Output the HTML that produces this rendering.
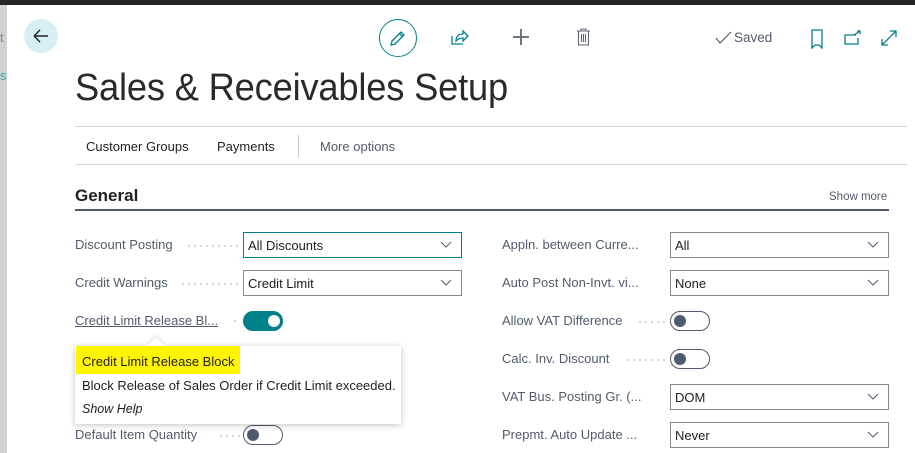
<!DOCTYPE html>
<html><head><meta charset="utf-8"><style>
*{box-sizing:border-box;margin:0;padding:0}
body{width:915px;height:453px;overflow:hidden;background:#fff;font-family:"Liberation Sans",sans-serif;color:#212121;position:relative}
.a{position:absolute}
.lbl{position:absolute;font-size:13px;color:#505c6d;white-space:nowrap}
.dots{position:absolute;height:2px;background-image:radial-gradient(circle,#c8c8c8 0.8px,transparent 1px);background-size:6px 2px}
.inp{position:absolute;height:26px;border:1px solid #8a8886;font-size:13px;color:#212121;padding:5px 0 0 4px;background:#fff}
.inp svg{position:absolute;right:9px;top:8px}
.tog{position:absolute;width:40px;height:20px;border:1px solid #505c6d;border-radius:10px;background:#fff}
.tog::after{content:"";position:absolute;left:3px;top:3px;width:12px;height:12px;border-radius:50%;background:#505c6d}
.tog.on{background:#00818a;border-color:#00818a}
.tog.on::after{left:24px;background:#fff}
</style></head><body>
<div class="a" style="left:0;top:0;width:915px;height:5px;background:#262626"></div>
<div class="a" style="left:0;top:5px;width:7px;height:448px;background:#d0d2d3"></div>
<div class="a" style="left:0;top:30px;font-size:13px;color:#888">t</div>
<div class="a" style="left:0;top:68px;font-size:13px;color:#3aa">s</div>
<div class="a" style="left:24px;top:19px;width:34px;height:34px;border-radius:50%;background:#d7eef2"></div>
<svg class="a" style="left:31px;top:26px" width="20" height="20" viewBox="0 0 20 20"><path d="M3 10H17M3 10L9 4M3 10L9 16" stroke="#212121" stroke-width="1.4" fill="none"/></svg>
<div class="a" style="left:379px;top:19px;width:38px;height:38px;border-radius:50%;border:1.5px solid #00818a"></div>
<svg class="a" style="left:388px;top:28px" width="20" height="20" viewBox="0 0 20 20"><path d="M3 17L4 13L13 4L16 7L7 16Z M11.5 5.5L14.5 8.5" stroke="#00818a" stroke-width="1.3" fill="none"/></svg>
<svg class="a" style="left:450px;top:28px" width="20" height="18" viewBox="0 0 20 18"><path d="M2 8V16H13 M6 13C6 8 9 6 13 6V3L18 8L13 13V10C10 10 8 11 6 13Z" stroke="#00818a" stroke-width="1.3" fill="none"/></svg>
<svg class="a" style="left:512px;top:28px" width="18" height="18" viewBox="0 0 18 18"><path d="M9 1V17M1 9H17" stroke="#5f6670" stroke-width="1.8"/></svg>
<svg class="a" style="left:576px;top:28px" width="15" height="18" viewBox="0 0 15 18"><path d="M1 3H14M5 3V1H10V3M2.5 3V17H12.5V3M5.5 6V14M7.5 6V14M9.5 6V14" stroke="#5f6670" stroke-width="1.1" fill="none"/></svg>
<svg class="a" style="left:715px;top:31px" width="18" height="14" viewBox="0 0 18 14"><path d="M1 7L5 12L16 1" stroke="#505c6d" stroke-width="1.2" fill="none"/></svg>
<div class="a" style="left:734px;top:30px;font-size:13.5px;color:#505c6d">Saved</div>
<svg class="a" style="left:810px;top:29px" width="14" height="20" viewBox="0 0 14 20"><path d="M2 1H12V19L9 16H5L2 19Z" stroke="#00818a" stroke-width="1.3" fill="none"/></svg>
<svg class="a" style="left:844px;top:30px" width="18" height="16" viewBox="0 0 18 16"><path d="M12 5H1V14H14V8 M10 5L16 1M13 1H16V4" stroke="#00818a" stroke-width="1.3" fill="none"/></svg>
<svg class="a" style="left:880px;top:29px" width="18" height="18" viewBox="0 0 18 18"><path d="M2 16L16 2M10 2H16V8M2 10V16H8" stroke="#00818a" stroke-width="1.3" fill="none"/></svg>
<div class="a" style="left:75px;top:67px;font-size:38px;font-weight:300;color:#2a2a2a;letter-spacing:-0.2px;white-space:nowrap;transform:scaleX(0.955);transform-origin:left">Sales &amp; Receivables Setup</div>
<div class="a" style="left:75px;top:126px;width:832px;height:1px;background:#d6d6d6"></div>
<div class="a" style="left:86px;top:139px;font-size:13px;color:#212121">Customer Groups</div>
<div class="a" style="left:217px;top:139px;font-size:13px;color:#212121">Payments</div>
<div class="a" style="left:298px;top:135px;width:1px;height:22px;background:#c8c8c8"></div>
<div class="a" style="left:320px;top:139px;font-size:13px;color:#505c6d">More options</div>
<div class="a" style="left:75px;top:164px;width:832px;height:1px;background:#d6d6d6"></div>
<div class="a" style="left:75px;top:186px;font-size:17px;font-weight:bold;color:#212121">General</div>
<div class="a" style="left:829px;top:191px;font-size:11.5px;color:#505c6d">Show more</div>
<div class="a" style="left:75px;top:209px;width:814px;height:2px;background:#505c6d"></div>

<div class="lbl" style="left:75px;top:237px">Discount Posting</div><div class="dots" style="left:186px;top:245px;width:54px"></div>
<div class="inp" style="left:243px;top:232px;width:219px;border-color:#00818a;border-width:1.5px">All Discounts<svg width="12" height="8"><path d="M1 1L6 6L11 1" stroke="#505c6d" fill="none"/></svg></div>
<div class="lbl" style="left:75px;top:275px">Credit Warnings</div><div class="dots" style="left:180px;top:283px;width:60px"></div>
<div class="inp" style="left:243px;top:270px;width:219px">Credit Limit<svg width="12" height="8"><path d="M1 1L6 6L11 1" stroke="#505c6d" fill="none"/></svg></div>
<div class="lbl" style="left:75px;top:313px;text-decoration:underline">Credit Limit Release Bl...</div><div class="dots" style="left:232px;top:320px;width:6px"></div>
<div class="tog on" style="left:243px;top:311px"></div>
<div class="lbl" style="left:75px;top:427px">Default Item Quantity</div><div class="dots" style="left:218px;top:435px;width:22px"></div>
<div class="tog" style="left:243px;top:425px"></div>

<div class="a" style="left:75px;top:346px;width:326px;height:78px;background:#fff;box-shadow:0 1px 6px rgba(0,0,0,0.25)"></div>
<div class="a" style="left:150px;top:340px;width:12px;height:12px;background:#fff;transform:rotate(45deg);box-shadow:-2px -2px 3px rgba(0,0,0,0.08)"></div>
<div class="a" style="left:76px;top:346px;width:164px;height:28px;background:#fff500"></div>
<div class="a" style="left:82px;top:354px;font-size:13px;color:#212121">Credit Limit Release Block</div>
<div class="a" style="left:82px;top:378px;font-size:13px;color:#212121">Block Release of Sales Order if Credit Limit exceeded.</div>
<div class="a" style="left:82px;top:402px;font-size:12.5px;font-style:italic;color:#212121">Show Help</div>

<div class="lbl" style="left:502px;top:237px">Appln. between Curre...</div>
<div class="inp" style="left:670px;top:232px;width:219px">All<svg width="12" height="8"><path d="M1 1L6 6L11 1" stroke="#505c6d" fill="none"/></svg></div>
<div class="lbl" style="left:502px;top:275px">Auto Post Non-Invt. vi...</div>
<div class="inp" style="left:670px;top:270px;width:219px">None<svg width="12" height="8"><path d="M1 1L6 6L11 1" stroke="#505c6d" fill="none"/></svg></div>
<div class="lbl" style="left:502px;top:313px">Allow VAT Difference</div><div class="dots" style="left:637px;top:321px;width:30px"></div>
<div class="tog" style="left:670px;top:311px"></div>
<div class="lbl" style="left:502px;top:351px">Calc. Inv. Discount</div><div class="dots" style="left:625px;top:359px;width:42px"></div>
<div class="tog" style="left:670px;top:349px"></div>
<div class="lbl" style="left:502px;top:389px">VAT Bus. Posting Gr. (...</div>
<div class="inp" style="left:670px;top:384px;width:219px">DOM<svg width="12" height="8"><path d="M1 1L6 6L11 1" stroke="#505c6d" fill="none"/></svg></div>
<div class="lbl" style="left:502px;top:427px">Prepmt. Auto Update ...</div>
<div class="inp" style="left:670px;top:422px;width:219px">Never<svg width="12" height="8"><path d="M1 1L6 6L11 1" stroke="#505c6d" fill="none"/></svg></div>
</body></html>
